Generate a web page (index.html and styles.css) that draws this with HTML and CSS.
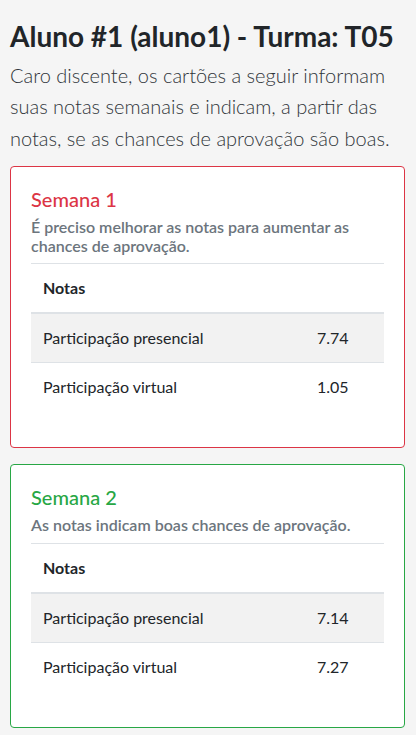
FILE: index.html
```html
<!DOCTYPE html>
<html lang="pt-BR">
<head>
<meta charset="utf-8">
<title>Notas</title>
<link rel="stylesheet" href="styles.css">
</head>
<body>
<main class="container">
  <h3 class="page-title">Aluno #1 (aluno1) - Turma: T05</h3>
  <p class="lead">Caro discente, os cartões a seguir informam suas notas semanais e indicam, a partir das notas, se as chances de aprovação são boas.</p>

  <section class="card card-danger">
    <div class="card-body">
      <h5 class="card-title">Semana 1</h5>
      <h6 class="card-subtitle">É preciso melhorar as notas para aumentar as chances de aprovação.</h6>
      <table class="table">
        <thead>
          <tr><th class="col-label">Notas</th><th></th></tr>
        </thead>
        <tbody>
          <tr class="striped"><td class="col-label">Participação presencial</td><td>7.74</td></tr>
          <tr><td class="col-label">Participação virtual</td><td>1.05</td></tr>
        </tbody>
      </table>
    </div>
  </section>

  <section class="card card-success">
    <div class="card-body">
      <h5 class="card-title">Semana 2</h5>
      <h6 class="card-subtitle">As notas indicam boas chances de aprovação.</h6>
      <table class="table">
        <thead>
          <tr><th class="col-label">Notas</th><th></th></tr>
        </thead>
        <tbody>
          <tr class="striped"><td class="col-label">Participação presencial</td><td>7.14</td></tr>
          <tr><td class="col-label">Participação virtual</td><td>7.27</td></tr>
        </tbody>
      </table>
    </div>
  </section>
</main>
</body>
</html>
```
FILE: styles.css
```css
* { box-sizing: border-box; }
html, body { margin: 0; padding: 0; }
body {
  background: #f5f5f5;
  color: #212529;
  font-family: Lato, "Liberation Sans", sans-serif;
  font-size: 16px;
  line-height: 1.5;
}
.container {
  padding: 20px 11px 16px 10px;
}
.page-title {
  margin: 0 0 6px;
  font-size: 28px;
  font-weight: 700;
  line-height: 1.2;
  color: #212529;
}
.lead {
  margin: 0 0 12px;
  font-size: 20px;
  font-weight: 300;
  line-height: 31.5px;
  color: #2f3439;
}
.card {
  background: #fff;
  border: 1px solid #dee2e6;
  border-radius: 4px;
  margin-bottom: 16px;
}
.card-danger { border-color: #dc3545; }
.card-success { border-color: #28a745; }
.card-body { padding: 20px; }
.card-title {
  margin: 0 0 12px;
  font-size: 20px;
  font-weight: 500;
  line-height: 1.2;
}
.card-danger .card-title { color: #dc3545; }
.card-success .card-title { color: #28a745; }
.card-subtitle {
  margin: -6px 0 8px;
  font-size: 16px;
  font-weight: 600;
  line-height: 1.2;
  color: #6c757d;
}
.table {
  width: 100%;
  border-collapse: collapse;
  margin-bottom: 16px;
  color: #212529;
}
.table th, .table td {
  padding: 12px;
  text-align: left;
  vertical-align: top;
  border-top: 1px solid #dee2e6;
  font-size: 16px;
  line-height: 24px;
}
.table thead th {
  font-weight: 700;
  border-bottom: 2px solid #dee2e6;
}
.table .col-label { width: 274px; }
.table .striped td { background: #f2f2f2; }
```
